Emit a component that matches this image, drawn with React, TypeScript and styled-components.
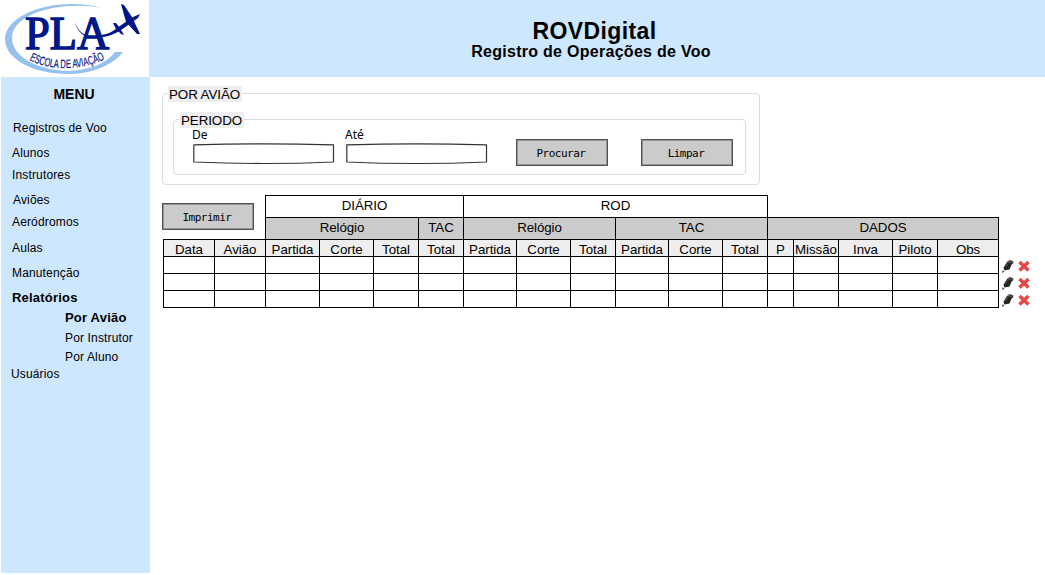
import React from "react";
import styled, { createGlobalStyle } from "styled-components";

const Global = createGlobalStyle`
  * { box-sizing: border-box; }
  body { margin: 0; background: #fff; color: #000; font-family: "Liberation Sans", Arial, sans-serif; }
`;

const Page = styled.div`
  display: grid;
  grid-template-columns: 149px 895px;
  grid-template-rows: 77px 496px;
  padding-left: 1px;
  width: 1045px;
  height: 575px;
  overflow: hidden;
`;

const LogoBox = styled.div`
  background: #fff;
  svg { display: block; margin-left: -1px; }
`;

const Header = styled.header`
  background: #cde7ff;
  padding: 18px 0 0;
  margin-left: -1px;
  width: 896px;
  text-align: center;
  font-weight: bold;
`;

const Title = styled.h1`
  margin: 0;
  padding-right: 5px;
  font-size: 23px;
  line-height: 26px;
  letter-spacing: 0.4px;
`;

const Subtitle = styled.h2`
  margin: 0;
  padding-right: 12px;
  font-size: 16px;
  line-height: 15px;
  letter-spacing: 0.28px;
`;

const Sidebar = styled.nav`
  background: #cde7ff;
`;

const MenuTitle = styled.div`
  padding: 9px 3px 0 0;
  height: 42px;
  text-align: center;
  font-size: 14px;
  line-height: 16px;
  font-weight: bold;
`;

const MenuItem = styled.a<{ $h: number; $x: number; $bold?: boolean }>`
  display: flex;
  align-items: flex-start;
  height: ${(p) => p.$h}px;
  padding-left: ${(p) => p.$x - 1}px;
  font-size: ${(p) => (p.$bold ? 13 : 12)}px;
  line-height: 18px;
  font-weight: ${(p) => (p.$bold ? "bold" : "normal")};
  letter-spacing: ${(p) => (p.$bold ? 0.2 : 0.15)}px;
  white-space: nowrap;
`;

const Main = styled.main`
  padding: 16px 0 0 12px;
`;

const Group = styled.section`
  border: 1px solid #d5dee6;
  border-radius: 4px;
`;

const OuterGroup = styled(Group)`
  width: 598px;
  height: 92px;
  padding: 0 13px 0 10px;
`;

const InnerGroup = styled(Group)`
  height: 56px;
  margin-top: 17px;
  padding-left: 6px;
`;

const GroupLabel = styled.div<{ $ml: number }>`
  width: fit-content;
  height: 16px;
  margin: -8px 0 0 ${(p) => p.$ml}px;
  padding: 0 2px 0 1px;
  background: #eee;
  font-size: 13.4px;
  line-height: 17px;
  letter-spacing: -0.1px;
  white-space: nowrap;
`;

const Form = styled.div`
  display: flex;
  padding-left: 13px;
`;

const Field = styled.label`
  width: 153px;
  font-family: "Noto Sans", sans-serif;
  font-size: 12px;
  line-height: 14px;
  svg { display: block; }
  span { display: block; height: 14px; margin-left: -1px; }
`;

const SketchButton = styled.button`
  width: 92px;
  height: 27px;
  padding: 1px 2px 0 0;
  border: 1px solid #505050;
  box-shadow: inset 0 0 0 1px #969696;
  background: #cbcbcb;
  color: #000;
  font-family: "DejaVu Sans Mono", monospace;
  font-size: 11px;
  letter-spacing: -0.5px;
`;

const SearchButton = styled(SketchButton)`
  margin: 11px 33px 0 17px;
`;

const ClearButton = styled(SketchButton)`
  margin-top: 11px;
`;

const Table = styled.div`
  display: grid;
  width: 882px;
  margin: 10px 0 0 1px;
  grid-template-columns: 51px 51px 54px 54px 45px 45px 53px 54px 45px 53px 54px 45px 26px 45px 54px 45px 61px 47px;
  grid-template-rows: 22px 22px repeat(4, 17px);
`;

const Cell = styled.div<{ $bg?: string; $col?: string; $row?: number }>`
  grid-column: ${(p) => p.$col || "auto"};
  grid-row: ${(p) => p.$row || "auto"};
  margin: 0 -1px -1px 0;
  border: 1px solid #000;
  background: ${(p) => p.$bg || "#fff"};
  text-align: center;
  font-size: 13.3px;
  line-height: 19px;
  letter-spacing: -0.05px;
  white-space: nowrap;
`;

const PrintSlot = styled.div`
  grid-column: 1 / 3;
  grid-row: 1 / 3;
  padding-top: 8px;
  margin-left: -1px;
`;

const Actions = styled.div<{ $row: number }>`
  grid-column: 18;
  grid-row: ${(p) => p.$row};
  display: flex;
  gap: 4px;
  padding: 4px 0 0 4px;
  margin-bottom: -2px;
  svg { display: block; flex: none; }
`;

const Logo = () => (
  <svg width="149" height="77" viewBox="0 0 149 77">
    <path d="M101 8C92 5 83 4 72 4C35 4 5 20 5 39C5 59 33 74 68 74C91 74 112 66 123 52H115C106 64 89 70 68 71C38 70 12 57 12 38C12 20 39 7 72 6C83 5.500 92 6 101 8Z" fill="#97c1ef" />
    <text x="25" y="49" fontFamily="Liberation Serif, serif" fontSize="46" fill="#001789" stroke="#001789" strokeWidth="1.500" textLength="84" lengthAdjust="spacingAndGlyphs">
      PLA
    </text>
    <path d="M75 22C78 32 86 38 97 36C107 34 111 33 117 28L133 17L140 14L138 18L124 28C116 34 107 37 98 38C86 39 77 33 75 22Z" fill="#001789" />
    <path d="M121 4L124 5L132 17L140 34L137 34L126 22Z M113 23L116 23L120 28L124 35L121 34L116 29Z" fill="#001789" />
    <path id="motto" d="M29 60C43 67 54 68 66 68C82 68 94 64 106 59" fill="none" />
    <text fontFamily="Liberation Sans, sans-serif" fontSize="12" fill="#001789" stroke="#001789" strokeWidth=".2">
      <textPath href="#motto" textLength="78" lengthAdjust="spacingAndGlyphs">ESCOLA DE AVIAÇÃO</textPath>
    </text>
  </svg>
);

const InputSketch = () => (
  <svg width="142" height="24" viewBox="0 0 142 24">
    <path d="M.8 2.800Q70.500 .8 140.500 2.800V20Q70.500 23 .8 20Z" fill="#fff" stroke="#333" strokeWidth="1.200" strokeLinejoin="round" />
  </svg>
);

const Pencil = () => (
  <svg width="12" height="13" viewBox="0 0 12 13">
    <path d="M5.500 1L8 0L11.500 1.500L11 4L9.500 3.500Z" fill="#444" />
    <path d="M5.300 1.500L10.200 3.300L7.500 9.500L2.500 10.600L1.500 7.800Z" fill="#252323" />
    <path d="M6 2.700L3.500 7.200" stroke="#666" strokeWidth=".6" />
    <path d="M.6 10.300L2.500 11.500L.1 13Z" fill="#444" />
  </svg>
);

const Cross = () => (
  <svg width="12" height="12" viewBox="0 0 12 12">
    <path d="M1.500 2L10.500 10.500M10.500 2L1.500 10.500" stroke="#e64545" strokeWidth="3.500" />
  </svg>
);

const menu = [
  { label: "Registros de Voo", h: 25, x: 13 },
  { label: "Alunos", h: 22, x: 12 },
  { label: "Instrutores", h: 25, x: 12 },
  { label: "Aviões", h: 22, x: 13 },
  { label: "Aeródromos", h: 26, x: 12 },
  { label: "Aulas", h: 25, x: 12 },
  { label: "Manutenção", h: 25, x: 12 },
  { label: "Relatórios", h: 20, x: 12, bold: true },
  { label: "Por Avião", h: 20, x: 65, bold: true },
  { label: "Por Instrutor", h: 19, x: 65 },
  { label: "Por Aluno", h: 17, x: 65 },
  { label: "Usuários", h: 18, x: 11 },
];

const columns = [
  "Data", "Avião", "Partida", "Corte", "Total", "Total", "Partida", "Corte", "Total",
  "Partida", "Corte", "Total", "P", "Missão", "Inva", "Piloto", "Obs",
];

export default function App() {
  return (
    <Page>
      <Global />
      <LogoBox><Logo /></LogoBox>
      <Header>
        <Title>ROVDigital</Title>
        <Subtitle>Registro de Operações de Voo</Subtitle>
      </Header>
      <Sidebar>
        <MenuTitle>MENU</MenuTitle>
        {menu.map((m) => (
          <MenuItem key={m.label} $h={m.h} $x={m.x} $bold={m.bold}>{m.label}</MenuItem>
        ))}
      </Sidebar>
      <Main>
        <OuterGroup>
          <GroupLabel $ml={-5}>POR AVIÃO</GroupLabel>
          <InnerGroup>
            <GroupLabel $ml={0}>PERIODO</GroupLabel>
            <Form>
              <Field><span>De</span><InputSketch /></Field>
              <Field><span>Até</span><InputSketch /></Field>
              <SearchButton>Procurar</SearchButton>
              <ClearButton>Limpar</ClearButton>
            </Form>
          </InnerGroup>
        </OuterGroup>
        <Table>
          <PrintSlot><SketchButton>Imprimir</SketchButton></PrintSlot>
          <Cell $row={1} $col="3 / 7">DIÁRIO</Cell>
          <Cell $row={1} $col="7 / 13">ROD</Cell>
          <Cell $row={2} $col="3 / 6" $bg="#cbcbcb">Relógio</Cell>
          <Cell $row={2} $col="6 / 7" $bg="#cbcbcb">TAC</Cell>
          <Cell $row={2} $col="7 / 10" $bg="#cbcbcb">Relógio</Cell>
          <Cell $row={2} $col="10 / 13" $bg="#cbcbcb">TAC</Cell>
          <Cell $row={2} $col="13 / 18" $bg="#cbcbcb">DADOS</Cell>
          {columns.map((c, i) => (
            <Cell key={i} $row={3} $col={`${i + 1}`} $bg="#eee">{c}</Cell>
          ))}
          {[4, 5, 6].map((row) => (
            <React.Fragment key={row}>
              {columns.map((_, i) => (
                <Cell key={i} $row={row} $col={`${i + 1}`} />
              ))}
              <Actions $row={row}><Pencil /><Cross /></Actions>
            </React.Fragment>
          ))}
        </Table>
      </Main>
    </Page>
  );
}
